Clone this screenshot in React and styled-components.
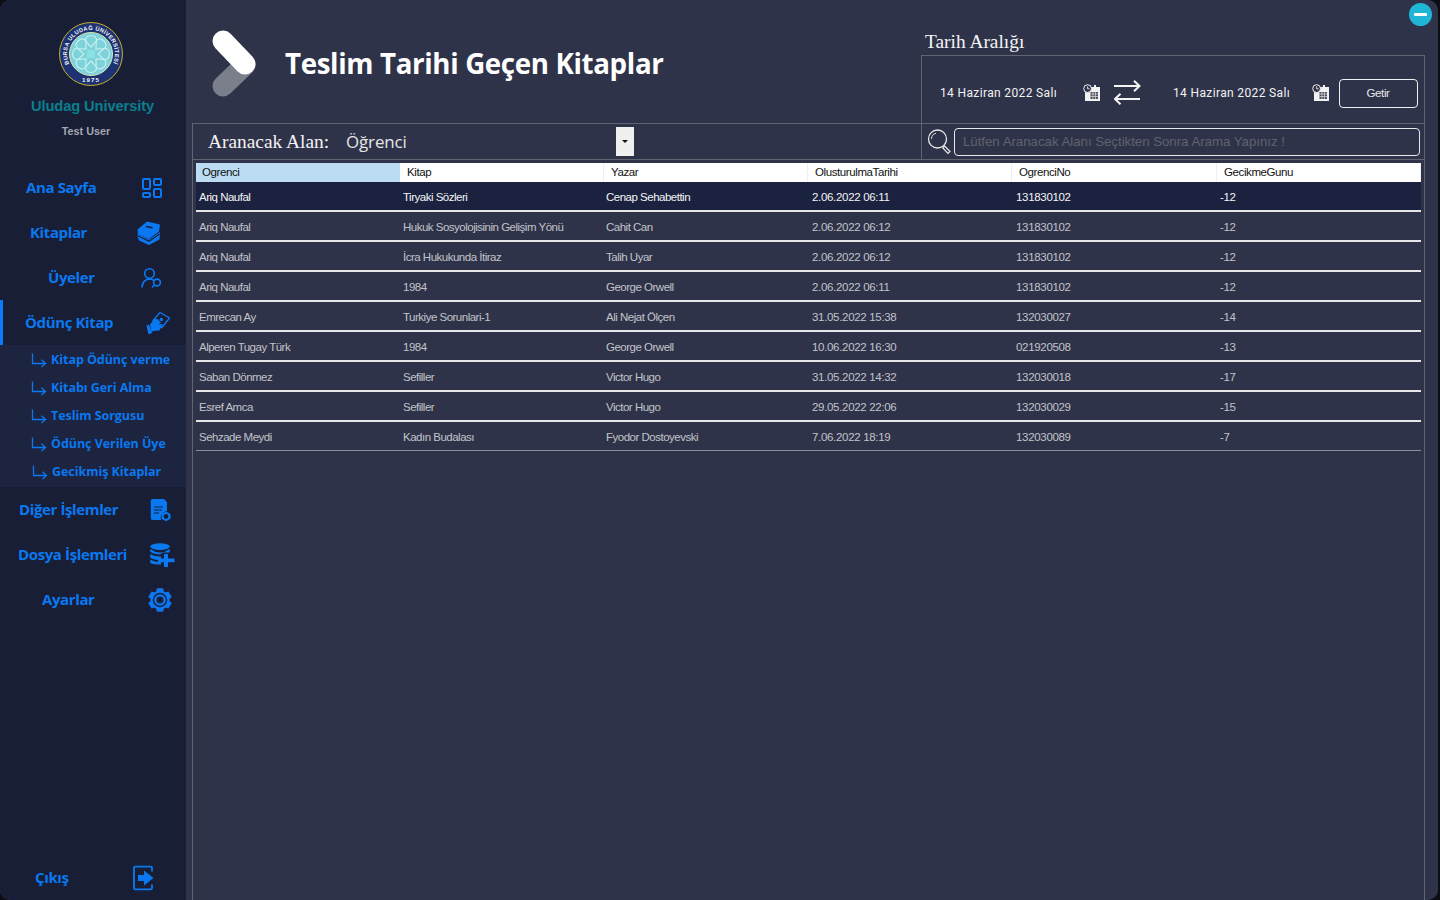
import React from "react";
import styled, { createGlobalStyle } from "styled-components";

const Global = createGlobalStyle`
  html, body { margin: 0; padding: 0; height: 100%; background: #0c0d12; overflow: hidden; }
  #root { height: 100%; }
  * { box-sizing: border-box; }
`;

const Win = styled.div`
  width: 1438px; height: 900px; display: flex; position: relative;
  background: #2f3349; border-radius: 10px; overflow: hidden;
`;
const Side = styled.aside`
  width: 186px; flex: none; background: #181e36; display: flex; flex-direction: column;
  border-radius: 10px 0 0 10px;
`;
const Brand = styled.div`
  height: 165px; padding-top: 22px; display: flex; flex-direction: column; align-items: center;
`;
const LogoMark = styled.svg`
  margin-right: 4px; flex: none;
`;
const Uni = styled.div`
  margin-top: 11px; font: 700 14.7px/18px "Liberation Sans", sans-serif; color: #0b7e8e; letter-spacing: -0.1px; margin-right: 1px;
`;
const UserName = styled.div`
  margin-top: 9px; font: 700 10.8px/14px "Liberation Sans", sans-serif; color: #a5a7b0; margin-right: 14px;
`;
const NavRow = styled.div`
  height: 45px; flex: none; display: flex; align-items: center; position: relative;
  padding-left: ${p => p.$pad}px; padding-bottom: 2px; color: #0a78f0;
  font: 700 15px/20px "Open Sans", sans-serif; letter-spacing: -0.38px;
  ${p => p.$active && "background:#181e36; box-shadow: inset 3px 0 0 #0a7cf5;"}
`;
const NavIcon = styled.svg`
  position: absolute; left: ${p => p.$x}px; top: 50%; transform: translateY(-50%);
`;
const SubPanel = styled.div`
  height: 142px; flex: none; background: #1c2440; display: flex; flex-direction: column; padding-top: 1px;
`;
const SubRow = styled.div`
  height: 28px; flex: none; display: flex; align-items: center; gap: 4px; padding-left: ${p => p.$pad || 31}px;
  font: 700 12.5px/16px "Open Sans", sans-serif; color: #0a78f0; letter-spacing: -0.05px;
`;
const Spacer = styled.div` flex: 1; `;
const Main = styled.main`
  flex: 1; min-width: 0; display: flex; flex-direction: column;
`;
const TopBar = styled.header`
  height: 123px; flex: none; display: flex; position: relative;
`;
const TitleZone = styled.div`
  width: 735px; flex: none; display: flex; align-items: center; padding: 0 0 0 25px; gap: 28px;
`;
const PageTitle = styled.h1`
  margin: 0; font: 700 27.7px/38px "Open Sans", sans-serif; color: #fff; letter-spacing: -0.35px; padding-top: 2px;
`;
const DateZone = styled.div`
  width: 504px; flex: none; display: flex; flex-direction: column;
`;
const DateLabel = styled.div`
  height: 55px; padding: 30px 0 0 4px; font: 400 19.4px/24px "Liberation Serif", serif; color: #f4f4f4;
`;
const DateBox = styled.div`
  flex: 1; border: 1px solid #62646f; border-bottom: 0; display: flex; align-items: center;
  padding: 7px 6px 0 18px; 
`;
const DateText = styled.span`
  font: 400 12px/16px Roboto, sans-serif; color: #f2f2f2; letter-spacing: 0.36px; width: ${p => p.$w}px; flex: none;
  margin-left: ${p => p.$gap || 0}px;
`;
const GetBtn = styled.button`
  width: 79px; height: 29px; margin-left: auto; background: transparent; border: 1px solid #f0f0f0; border-radius: 4px;
  color: #e8e8e8; font: 400 11.5px/14px "Liberation Sans", sans-serif; letter-spacing: -0.35px; padding: 0 1px 0 0;
`;
const Panel = styled.section`
  flex: 1; margin: 0 13px 0 6px; border-left: 1px solid #62646f; border-right: 1px solid #62646f;
  display: flex; flex-direction: column; min-height: 0;
`;
const SearchBar = styled.div`
  height: 37px; flex: none; display: flex; border-top: 1px solid #62646f; border-bottom: 1px solid #62646f;
`;
const FieldZone = styled.div`
  width: 729px; flex: none; display: flex; align-items: center; padding-left: 15px; border-right: 1px solid #62646f; position: relative;
`;
const FieldLabel = styled.span`
  font: 400 19.4px/24px "Liberation Serif", serif; color: #f4f4f4; width: 138px; flex: none;
`;
const FieldValue = styled.span`
  font: 400 16.9px/24px "Open Sans", sans-serif; color: #e6e6e6; width: 270px; flex: none; letter-spacing: -0.1px;
`;
const DropBtn = styled.div`
  width: 18px; height: 29px; background: #f0f0f0; display: flex; align-items: center; justify-content: center; flex: none;
  &::after { content: ""; border: 3px solid transparent; border-top: 3px solid #111; border-bottom: 0; }
`;
const QueryZone = styled.div`
  flex: 1; display: flex; align-items: center; padding: 0 4px 0 5px; gap: 2px;
`;
const QueryBox = styled.div`
  flex: 1; height: 28px; border: 1px solid #e8e8e8; border-radius: 4px; padding-left: 8px; display: flex; align-items: center;
  font: 400 13.3px/16px "Liberation Sans", sans-serif; color: #60626e; letter-spacing: -0.04px;
`;
const Table = styled.div`
  margin: 3px 3px 0 3px; display: flex; flex-direction: column;
`;
const Cols = "204px 204px 204px 204px 205px 204px";
const HeadRow = styled.div`
  height: 19px; display: grid; grid-template-columns: ${Cols}; background: #fff;
`;
const HeadCell = styled.div`
  padding-left: ${p => (p.$sel ? 6 : 7)}px; font: 400 11.5px/19px "Liberation Sans", sans-serif; color: #111; letter-spacing: -0.4px;
  background: ${p => (p.$sel ? "#bcdcf4" : "#fff")}; border-right: ${p => (p.$sel ? "0" : "1px solid #f0f0f0")};
`;
const Row = styled.div`
  height: ${p => (p.$last ? 29 : 30)}px; display: grid; grid-template-columns: ${Cols}; align-items: center;
  background: ${p => (p.$first ? "#1b2240" : "transparent")};
  color: ${p => (p.$first ? "#f4f4f4" : "#c2c3c9")};
  border-bottom: ${p => (p.$last ? "1px solid #8d8f98" : "2px solid #e6e6e6")};
`;
const Cell = styled.div`
  padding: 2px 0 0 ${p => p.$pad}px; font: 400 11.5px/16px "Liberation Sans", sans-serif;
  letter-spacing: ${p => (p.$num ? "-0.32px" : "-0.5px")}; white-space: nowrap;
`;
const MinBtn = styled.div`
  position: absolute; top: 3px; right: 6px; width: 23px; height: 23px; border-radius: 50%; background: #1fb5d7;
  display: flex; align-items: center; justify-content: center;
  &::after { content: ""; width: 13px; height: 3px; border-radius: 1px; background: #fff; }
`;

const blue = "#0a78f0";
const navy = "#181e36";

const Logo = () => (
  <LogoMark width="64" height="64" viewBox="0 0 64 64">
    <defs>
      <path id="arcT" d="M10.2 42 A24 24 0 1 1 53.8 42" />
    </defs>
    <circle cx="32" cy="32" r="31.5" fill="#1c3272" stroke="#c9ad2c" strokeWidth="1" />
    <circle cx="32" cy="32" r="21.5" fill="#7ed2da" stroke="#dbe6b0" strokeWidth="1" />
    <g fill="none" stroke="#c3eef0" strokeWidth="1.2">
      {[0, 45, 90, 135, 180, 225, 270, 315].map(a => (
        <path key={a} transform={`rotate(${a} 32 32)`} d="M32 25 L26.5 19 Q26 14 32 13.5 Q38 14 37.5 19 Z" />
      ))}
    </g>
    <rect x="28" y="28" width="8" height="8" fill="#8be0e4" />
    <text fontFamily="Liberation Sans" fontWeight="700" fontSize="5.7" fill="#f2f5f8">
      <textPath href="#arcT" textLength="95" lengthAdjust="spacing">BURSA ULUDAĞ ÜNİVERSİTESİ</textPath>
    </text>
    <text x="32" y="60" textAnchor="middle" fontFamily="Liberation Sans" fontWeight="700" fontSize="6.2" letterSpacing="1" fill="#f2f5f8">1975</text>
  </LogoMark>
);

const Chevron = () => (
  <svg width="46" height="69" viewBox="0 0 46 69" style={{ flex: "none", marginTop: 6 }}>
    <path d="M12 56 L34 35" stroke="#7b7e8b" strokeWidth="21" strokeLinecap="round" />
    <path d="M12 11 L34 34" stroke="#fff" strokeWidth="21" strokeLinecap="round" />
  </svg>
);

const SubArrow = () => (
  <svg width="16" height="15" viewBox="0 0 16 15" fill="none" stroke={blue} strokeWidth="1.3">
    <path d="M1.5 0.5 V10.5 H14.5 M10.5 6.8 L14.5 10.5 L10.5 14" />
  </svg>
);

const CalIcon = () => (
  <svg width="18" height="18" viewBox="0 0 18 18" style={{ flex: "none" }}>
    <path d="M2 3 H5 V1 H7 V3 H11 V1 H13 V3 H17 V17 H2 Z" fill="#f2f2f2" />
    <rect x="7.5" y="8" width="7.5" height="7" fill="#4d505e" />
    <path d="M7.5 10 H15 M7.5 12.5 H15 M10 8 V15 M12.5 8 V15" stroke="#dcdcdc" strokeWidth="0.7" />
    <circle cx="4.6" cy="4.6" r="3.9" fill="#2f3349" stroke="#f2f2f2" strokeWidth="1" />
    <path d="M4.6 2.4 V4.8 H6.6" fill="none" stroke="#f2f2f2" strokeWidth="0.9" />
  </svg>
);

const Swap = () => (
  <svg width="28" height="25" viewBox="0 0 28 25" fill="none" stroke="#f4f4f4" strokeWidth="2" style={{ flex: "none", margin: "0 0 2px 13px" }}>
    <path d="M0 6 H25 M20 0.7 L25.5 6 L20 11.3" />
    <path d="M26 19 H1.2 M6.5 13.7 L1 19 L6.5 24.3" />
  </svg>
);

const Magnifier = () => (
  <svg width="25" height="27" viewBox="0 0 25 27" fill="none" style={{ flex: "none" }}>
    <circle cx="10.5" cy="11" r="9" stroke="#e8e8e8" strokeWidth="1.3" />
    <path d="M4.5 11 A6 6 0 0 1 9 5.2" stroke="#e8e8e8" strokeWidth="0.9" />
    <path d="M17.5 18 L23 23.5 L21 25.5 L15.8 20 Z" stroke="#e8e8e8" strokeWidth="1.2" />
  </svg>
);

const rows = [
  ["Ariq Naufal", "Tiryaki Sözleri", "Cenap Sehabettin", "2.06.2022 06:11", "131830102", "-12"],
  ["Ariq Naufal", "Hukuk Sosyolojisinin Gelişim Yönü", "Cahit Can", "2.06.2022 06:12", "131830102", "-12"],
  ["Ariq Naufal", "İcra Hukukunda İtiraz", "Talih Uyar", "2.06.2022 06:12", "131830102", "-12"],
  ["Ariq Naufal", "1984", "George Orwell", "2.06.2022 06:11", "131830102", "-12"],
  ["Emrecan Ay", "Turkiye Sorunlari-1", "Ali Nejat Ölçen", "31.05.2022 15:38", "132030027", "-14"],
  ["Alperen Tugay Türk", "1984", "George Orwell", "10.06.2022 16:30", "021920508", "-13"],
  ["Saban Dönmez", "Sefiller", "Victor Hugo", "31.05.2022 14:32", "132030018", "-17"],
  ["Esref Amca", "Sefiller", "Victor Hugo", "29.05.2022 22:06", "132030029", "-15"],
  ["Sehzade Meydi", "Kadın Budalası", "Fyodor Dostoyevski", "7.06.2022 18:19", "132030089", "-7"],
];
const heads = ["Ogrenci", "Kitap", "Yazar", "OlusturulmaTarihi", "OgrenciNo", "GecikmeGunu"];
const pads = [3, 3, 2, 4, 4, 3];

const Icon = ({ x, w, h, children, fill = "none", stroke, sw }) => (
  <NavIcon $x={x} width={w} height={h} viewBox={`0 0 ${w} ${h}`} fill={fill} stroke={stroke} strokeWidth={sw}>
    {children}
  </NavIcon>
);

const subs = [["Kitap Ödünç verme"], ["Kitabı Geri Alma"], ["Teslim Sorgusu"], ["Ödünç Verilen Üye"], ["Gecikmiş Kitaplar", 32]];

export default function App() {
  return (
    <>
      <Global />
      <Win>
        <Side>
          <Brand>
            <Logo />
            <Uni>Uludag University</Uni>
            <UserName>Test User</UserName>
          </Brand>
          <NavRow $pad={26}>
            Ana Sayfa
            <Icon x={142} w={20} h={20} stroke={blue} sw="2">
              <rect x="1" y="1" width="7" height="10" rx="1" />
              <rect x="12" y="1" width="7" height="6" rx="1" />
              <rect x="1" y="15" width="7" height="4" rx="1" />
              <rect x="12" y="11" width="7" height="8" rx="1" />
            </Icon>
          </NavRow>
          <NavRow $pad={30}>
            Kitaplar
            <Icon x={137} w={24} h={25} fill={blue}>
              <path d="M0.5 9 L10 1 L23 4 L22 11 L12 18.5 L1 13.5 Z" />
              <path d="M0.5 13 L12 19 L23 11.5 L22.5 19 L12 24.5 L2 20 Q0 16 0.5 13 Z" />
              <path d="M1 15.3 L12 20.8 L22.5 13.5" fill="none" stroke={navy} strokeWidth="1.1" />
              <path d="M9 6 L15.5 7.3" stroke={navy} strokeWidth="1.6" />
            </Icon>
          </NavRow>
          <NavRow $pad={48}>
            Üyeler
            <Icon x={141} w={21} h={21} stroke={blue} sw="1.6">
              <circle cx="8.5" cy="6" r="4.8" />
              <path d="M1 20 Q1.5 12 8.5 11.5 Q11 11.5 13 13" />
              <circle cx="16" cy="15" r="3.4" />
              <path d="M13.5 17.5 L11 20" />
            </Icon>
          </NavRow>
          <NavRow $pad={25} $active>
            Ödünç Kitap
            <Icon x={146} w={24} h={23} fill={blue}>
              <path d="M14 1 L23.5 6.5 L16 16 L7 9 Z" fill="none" stroke={blue} strokeWidth="1.3" />
              <circle cx="15.3" cy="8" r="1.7" />
              <path d="M4 13 L8 8 Q10 6.5 12 8 L15 11 L12.5 13 L17 12.5 L13.5 19 L7 19.5 L5.5 21 Z" />
              <path d="M0.5 14 L3 13 L6 21.5 L2.5 23 Z" />
            </Icon>
          </NavRow>
          <SubPanel>
            {subs.map(([t, pad]) => (
              <SubRow key={t} $pad={pad}><SubArrow />{t}</SubRow>
            ))}
          </SubPanel>
          <NavRow $pad={19}>
            Diğer İşlemler
            <Icon x={150} w={22} h={24} fill={blue}>
              <path d="M2.5 1 H14 L17 4 V13 A7 7 0 0 0 11 22 H2.5 Q0.8 22 0.8 20 V3 Q0.8 1 2.5 1 Z" />
              <path d="M4 9 H13 M4 12 H12 M4 15 H9" stroke={navy} strokeWidth="1" />
              <path d="M16 13.5 L20.5 16 V20.8 L16 23.3 L11.5 20.8 V16 Z M16 16 A2.4 2.4 0 1 0 16.01 16 Z" fillRule="evenodd" />
            </Icon>
          </NavRow>
          <NavRow $pad={18}>
            Dosya İşlemleri
            <Icon x={150} w={25} h={24} fill={blue}>
              <ellipse cx="10" cy="3.6" rx="9.8" ry="3.3" />
              <path d="M0.2 6 Q5 9.5 10 9.5 Q15 9.5 19.8 6 V9.5 H13 L10 11.5 Q4 11.5 0.2 8.8 Z" />
              <path d="M0.2 11 Q4 13.5 10 13.5 H11 V17.2 Q4 17.2 0.2 14.8 Z" />
              <path d="M0.2 16.5 Q4 19 11 19 V21.5 Q4 21.5 0.2 20 Z" />
              <path d="M14 11 H18 V15.5 H24.5 V19.3 H18 V24 H14 V19.3 H8 V15.5 H14 Z" />
            </Icon>
          </NavRow>
          <NavRow $pad={42}>
            Ayarlar
            <Icon x={148} w={24} h={24} fill="none">
              <circle cx="12" cy="12" r="9.6" fill={blue} />
              <g fill={blue}>
                {[0, 60, 120, 180, 240, 300].map(a => (
                  <path key={a} transform={`rotate(${a} 12 12)`} d="M8.8 0.3 H15.2 L16 5 H8 Z" />
                ))}
              </g>
              <circle cx="12" cy="12" r="7.2" fill={navy} />
              <circle cx="12" cy="12" r="4.6" stroke={blue} strokeWidth="2.4" />
            </Icon>
          </NavRow>
          <Spacer />
          <NavRow $pad={35}>
            Çıkış
            <Icon x={133} w={21} h={25} fill="none">
              <path d="M19 6 V2.5 Q19 1 17.5 1 H2.5 Q1 1 1 2.5 V22.5 Q1 24 2.5 24 H17.5 Q19 24 19 22.5 V19" stroke={blue} strokeWidth="1.8" />
              <path d="M5 9.5 H11 V5 L20.5 12.5 L11 20 V15.5 H5 Z" fill={blue} />
            </Icon>
          </NavRow>
        </Side>
        <Main>
          <TopBar>
            <TitleZone>
              <Chevron />
              <PageTitle>Teslim Tarihi Geçen Kitaplar</PageTitle>
            </TitleZone>
            <DateZone>
              <DateLabel>Tarih Aralığı</DateLabel>
              <DateBox>
                <DateText $w={143}>14 Haziran 2022 Salı</DateText>
                <CalIcon />
                <Swap />
                <DateText $w={139} $gap={31}>14 Haziran 2022 Salı</DateText>
                <CalIcon />
                <GetBtn>Getir</GetBtn>
              </DateBox>
            </DateZone>
            <MinBtn />
          </TopBar>
          <Panel>
            <SearchBar>
              <FieldZone>
                <FieldLabel>Aranacak Alan:</FieldLabel>
                <FieldValue>Öğrenci</FieldValue>
                <DropBtn />
              </FieldZone>
              <QueryZone>
                <Magnifier />
                <QueryBox>Lütfen Aranacak Alanı Seçtikten Sonra Arama Yapınız !</QueryBox>
              </QueryZone>
            </SearchBar>
            <Table>
              <HeadRow>
                {heads.map((h, i) => <HeadCell key={h} $sel={i === 0}>{h}</HeadCell>)}
              </HeadRow>
              {rows.map((r, i) => (
                <Row key={i} $first={i === 0} $last={i === rows.length - 1}>
                  {r.map((c, j) => <Cell key={j} $pad={pads[j]} $num={j > 2}>{c}</Cell>)}
                </Row>
              ))}
            </Table>
          </Panel>
        </Main>
      </Win>
    </>
  );
}
